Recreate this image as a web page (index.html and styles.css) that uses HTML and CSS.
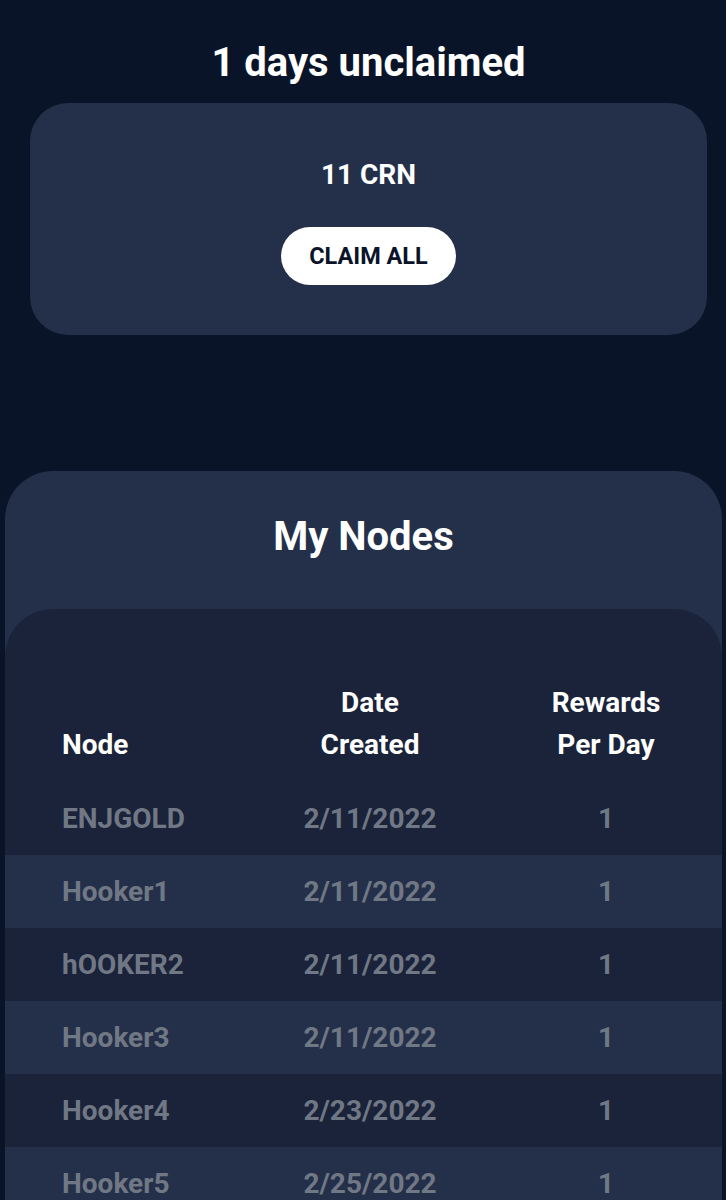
FILE: index.html
```html
<!DOCTYPE html>
<html lang="en">
  <head>
    <meta charset="UTF-8" />
    <meta name="viewport" content="width=device-width, initial-scale=1.0" />
    <title>My Nodes</title>
    <link rel="stylesheet" href="styles.css">
  </head>
  <body>
    <div class="claim">
      <h1 class="claim-title">1 days unclaimed</h1>
      <div class="claim-card">
        <div class="claim-amount">11 CRN</div>
        <button class="claim-button">CLAIM ALL</button>
      </div>
    </div>

    <div class="nodes">
      <h2 class="nodes-title">My Nodes</h2>
      <div class="nodes-panel">
        <table class="nodes-table">
          <thead>
            <tr>
              <th class="col-node">Node</th>
              <th class="col-date">Date<br />Created</th>
              <th class="col-rewards">Rewards<br />Per Day</th>
            </tr>
          </thead>
          <tbody>
            <tr>
              <td>ENJGOLD</td>
              <td>2/11/2022</td>
              <td>1</td>
            </tr>
            <tr>
              <td>Hooker1</td>
              <td>2/11/2022</td>
              <td>1</td>
            </tr>
            <tr>
              <td>hOOKER2</td>
              <td>2/11/2022</td>
              <td>1</td>
            </tr>
            <tr>
              <td>Hooker3</td>
              <td>2/11/2022</td>
              <td>1</td>
            </tr>
            <tr>
              <td>Hooker4</td>
              <td>2/23/2022</td>
              <td>1</td>
            </tr>
            <tr>
              <td>Hooker5</td>
              <td>2/25/2022</td>
              <td>1</td>
            </tr>
          </tbody>
        </table>
      </div>
    </div>
  </body>
</html>
```

FILE: styles.css
```css
body {
  font-family: Roboto, "Liberation Sans", Arial, sans-serif;
  font-weight: 700;
  margin: 0;
  padding: 0;
  background-color: #0a1429;
  color: #ffffff;
}
.claim {
  padding: 0 19px 0 30px;
}
.claim-title {
  margin: 0;
  padding-top: 39px;
  font-size: 40px;
  line-height: 48px;
  text-align: center;
}
.claim-card {
  margin-top: 16px;
  height: 232px;
  box-sizing: border-box;
  padding-top: 56px;
  background-color: #243049;
  border-radius: 38px;
  display: flex;
  flex-direction: column;
  align-items: center;
}
.claim-amount {
  font-size: 28px;
  line-height: 32px;
}
.claim-button {
  margin-top: 36px;
  height: 58px;
  padding: 0 28px;
  border: none;
  border-radius: 29px;
  background-color: #ffffff;
  color: #0a1429;
  font-family: inherit;
  font-weight: 700;
  font-size: 23.5px;
}
.nodes {
  margin: 136px 4px 0 5px;
  padding-top: 42px;
  background-color: #243049;
  border-radius: 48px 48px 0 0;
}
.nodes-title {
  margin: 0;
  font-size: 40px;
  line-height: 48px;
  text-align: center;
}
.nodes-panel {
  margin-top: 48px;
  background-color: #1a2339;
  border-radius: 48px 48px 0 0;
  overflow: hidden;
}
.nodes-table {
  width: 100%;
  border-collapse: collapse;
  table-layout: fixed;
}
.nodes-table th {
  padding: 73px 0 16px;
  font-size: 28px;
  line-height: 42px;
  vertical-align: bottom;
  text-align: center;
}
.nodes-table td {
  padding: 17px 0;
  font-size: 28px;
  line-height: 39px;
  color: #717885;
  text-align: center;
}
.nodes-table th.col-node,
.nodes-table td:first-child {
  text-align: left;
  padding-left: 57px;
}
.col-node {
  width: 188px;
}
.col-date {
  width: 240px;
}
.nodes-table tbody tr:nth-child(even) {
  background-color: #243049;
}
```
